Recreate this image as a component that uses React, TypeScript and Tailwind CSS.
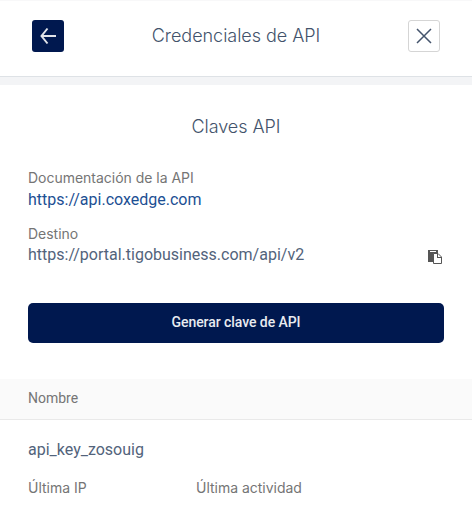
import type { ReactNode } from "react";

function Label({ children }: { children: ReactNode }) {
  return <div className="font-['Inter',sans-serif] text-[14px] leading-5 tracking-[-0.02px] text-[#757575]">{children}</div>;
}

function PasteIcon() {
  return (
    <svg width="14" height="14" viewBox="0 0 14 14" shapeRendering="crispEdges">
      <path d="M0 0h10v4H5v8H0z" fill="#555" />
      <path d="M2 1h6v1H2z" fill="#fff" />
      <path d="M5.500 3.500h4.500l3.500 3.500v6.500h-8z" fill="#fff" stroke="#555" shapeRendering="auto" />
      <path d="M9.500 3.500v4h4" fill="none" stroke="#555" />
    </svg>
  );
}

export default function App() {
  return (
    <div className="h-[520px] w-[472px] overflow-hidden bg-white font-['Roboto',sans-serif] text-[#52637b]">
      <div className="h-px bg-[#f8f8f9]" />
      <header className="flex h-[76px] items-center justify-between border-b border-[#dee2e6] px-8 pb-[5px]">
        <button className="flex size-8 items-center justify-center rounded-[3px] bg-[#00184f]" aria-label="Volver">
          <svg width="18" height="18" viewBox="0 0 18 18" fill="none" stroke="#e1e3e9" strokeWidth="2">
            <path d="M17 9H2.500M8.500 1.500 2.500 9l6 7.500" />
          </svg>
        </button>
        <h1 className="font-['Inter',sans-serif] text-[18px] font-light leading-6 tracking-[-0.04px] text-[#43536b]">Credenciales de API</h1>
        <button className="flex size-8 items-center justify-center rounded-[3px] border border-[#d5d5d5]" aria-label="Cerrar">
          <svg width="16" height="16" viewBox="0 0 16 16" fill="none" stroke="#44546c" strokeWidth="1.500">
            <path d="m1 1 14 14M15 1 1 15" />
          </svg>
        </button>
      </header>
      <div className="h-2 bg-[#f3f4f6]" />
      <main>
        <section className="px-7 pt-[30px]">
          <h2 className="text-center font-['Inter',sans-serif] text-[18px] font-light leading-6 tracking-[-0.06px] text-[#43536b]">Claves API</h2>
          <div className="pt-[29px]">
            <Label>Documentación de la API</Label>
            <a className="block text-[16px] leading-6 text-[#1c4f93]">https://api.coxedge.com</a>
          </div>
          <div className="pt-3">
            <Label>Destino</Label>
            <div className="flex h-[22px] items-center justify-between pr-[2px] text-[16px] leading-[22px]">
              <span>https://portal.tigobusiness.com/api/v2</span>
              <span className="pt-1"><PasteIcon /></span>
            </div>
          </div>
          <button className="mt-[37px] flex h-10 w-full items-center justify-center rounded-[5px] bg-[#00184f] pb-[2px] text-[14px] font-medium tracking-[-0.06px] text-[#e9ebf0]">Generar clave de API</button>
        </section>
        <section className="pt-9">
          <div className="flex h-[41px] items-center border-b border-[#e9e9e9] bg-[#fafafa] px-7 pb-[2px] text-[14px] text-[#757575]">Nombre</div>
          <div className="px-7 pt-[18px]">
            <div className="text-[16px] leading-6">api_key_zosouig</div>
            <div className="grid grid-cols-[168px_1fr] pt-4">
              <Label>Última IP</Label>
              <Label>Última actividad</Label>
            </div>
          </div>
        </section>
      </main>
    </div>
  );
}
